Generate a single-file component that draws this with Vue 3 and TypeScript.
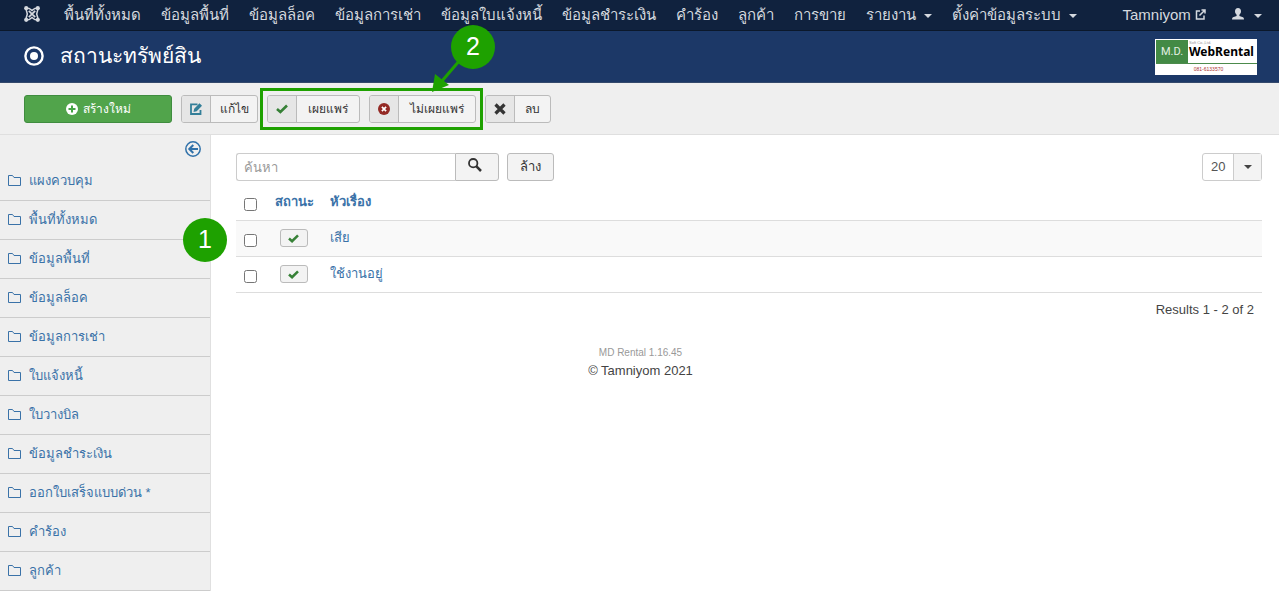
<script setup lang="ts">
import { ref } from 'vue'

interface MenuItem { label: string; dropdown?: boolean }
interface Row { id: number; title: string }

const menu: MenuItem[] = [
  { label: 'พื้นที่ทั้งหมด' },
  { label: 'ข้อมูลพื้นที่' },
  { label: 'ข้อมูลล็อค' },
  { label: 'ข้อมูลการเช่า' },
  { label: 'ข้อมูลใบแจ้งหนี้' },
  { label: 'ข้อมูลชำระเงิน' },
  { label: 'คำร้อง' },
  { label: 'ลูกค้า' },
  { label: 'การขาย' },
  { label: 'รายงาน', dropdown: true },
  { label: 'ตั้งค่าข้อมูลระบบ', dropdown: true },
]

const sidebar: string[] = [
  'แผงควบคุม',
  'พื้นที่ทั้งหมด',
  'ข้อมูลพื้นที่',
  'ข้อมูลล็อค',
  'ข้อมูลการเช่า',
  'ใบแจ้งหนี้',
  'ใบวางบิล',
  'ข้อมูลชำระเงิน',
  'ออกใบเสร็จแบบด่วน *',
  'คำร้อง',
  'ลูกค้า',
]

const rows: Row[] = [
  { id: 1, title: 'เสีย' },
  { id: 2, title: 'ใช้งานอยู่' },
]

const search = ref('')
const limit = ref('20')
const selected = ref<number[]>([])
</script>

<template>
  <div class="page">
    <nav class="navbar">
      <a class="brand" href="#" aria-label="Joomla">
        <svg width="16" height="16" viewBox="0 0 16 16" fill="none" stroke="currentColor">
          <path d="M4.800 4.800L11.200 11.200M11.200 4.800L4.800 11.200" stroke-width="1.700" />
          <path d="M2.500 2.500Q4.500 1.800 6 3L8 4.600L10 3Q11.500 1.800 13.500 2.500Q14.200 4.500 13.200 6Q12.200 8 13.200 10Q14.200 11.500 13.500 13.500Q11.500 14.200 10 13L8 11.400L6 13Q4.500 14.200 2.500 13.500Q1.800 11.500 2.800 10Q3.800 8 2.800 6Q1.800 4.500 2.500 2.500Z" stroke-width="1.600" />
          <g fill="currentColor" stroke="none">
            <circle cx="2.200" cy="2.200" r="2.100" /><circle cx="13.800" cy="2.200" r="2.100" />
            <circle cx="2.200" cy="13.800" r="2.100" /><circle cx="13.800" cy="13.800" r="2.100" />
          </g>
        </svg>
      </a>
      <ul class="menu">
        <li v-for="item in menu" :key="item.label">
          <a href="#">{{ item.label }}<i v-if="item.dropdown" class="caret"></i></a>
        </li>
      </ul>
      <a class="site" href="#">Tamniyom
        <svg width="11" height="11" viewBox="0 0 11 11" fill="none" stroke="currentColor" stroke-width="1.500">
          <path d="M5 2H1.500V10H9V6.500M4.500 6.500L9.500 1.500M6.500 1H10V4.500" />
        </svg>
      </a>
      <button class="user" type="button" aria-label="User menu">
        <svg width="12" height="12" viewBox="0 0 12 12" fill="currentColor">
          <path d="M6 0C8 0 9 1.500 9 3.300C9 5 8.200 6 7.400 6.800V8L11 9.200Q12 9.600 12 11.500H0Q0 9.600 1 9.200L4.600 8V6.800C3.800 6 3 5 3 3.300C3 1.500 4 0 6 0Z" />
        </svg>
        <i class="caret"></i>
      </button>
    </nav>

    <header class="header">
      <svg width="20" height="20" viewBox="0 0 20 20">
        <circle cx="10" cy="10" r="8.600" fill="none" stroke="currentColor" stroke-width="2.400" />
        <circle cx="10" cy="10" r="4" fill="currentColor" />
      </svg>
      <h1>สถานะทรัพย์สิน</h1>
      <div class="logo">
        <div class="logo-top">
          <span class="logo-md">M.D.</span>
          <span class="logo-name"><small>Soft Co.,Ltd.</small><b>WebRental</b></span>
        </div>
        <span class="logo-phone">081-6133570</span>
      </div>
    </header>

    <div class="toolbar">
      <button class="create" type="button">
        <svg width="12" height="12" viewBox="0 0 12 12"><circle cx="6" cy="6" r="6" fill="currentColor" /><path d="M6 2.500V9.500M2.500 6H9.500" stroke="#46a546" stroke-width="2" /></svg>
        สร้างใหม่
      </button>
      <button class="tool tool-edit" type="button">
        <span class="tool-icon edit">
          <svg width="12" height="12" viewBox="0 0 12 12" fill="none" stroke="currentColor">
            <path d="M7.500 1.300H1V11H10.500V7" stroke-width="1.800" /><path d="M3.500 9L4.200 5.800L9.500 .3L12 2.700L6.700 8.200Z" fill="currentColor" stroke="none" />
          </svg>
        </span>
        <span class="tool-label">แก้ไข</span>
      </button>
      <div class="publish-group">
        <button class="tool tool-publish" type="button">
          <span class="tool-icon ok">
            <svg width="12" height="10" viewBox="0 0 12 10"><path d="M1 5L4.400 8L11 1.500" fill="none" stroke="currentColor" stroke-width="2.600" /></svg>
          </span>
          <span class="tool-label">เผยแพร่</span>
        </button>
        <button class="tool tool-unpublish" type="button">
          <span class="tool-icon bad">
            <svg width="12" height="12" viewBox="0 0 12 12"><circle cx="6" cy="6" r="6" fill="currentColor" /><path d="M3.900 3.900L8.100 8.100M8.100 3.900L3.900 8.100" stroke="#fff" stroke-width="1.700" /></svg>
          </span>
          <span class="tool-label">ไม่เผยแพร่</span>
        </button>
        <span class="highlight"></span>
        <svg class="arrow" width="32" height="36" viewBox="0 0 32 36">
          <path d="M28 3L10 24" stroke="#1ea100" stroke-width="3" />
          <path d="M0 35L3 17L17 28Z" fill="#1ea100" />
        </svg>
        <span class="badge badge-two">2</span>
      </div>
      <button class="tool tool-delete" type="button">
        <span class="tool-icon">
          <svg width="12" height="12" viewBox="0 0 12 12"><path d="M1.500 1.500L10.500 10.500M10.500 1.500L1.500 10.500" stroke="currentColor" stroke-width="3.200" /></svg>
        </span>
        <span class="tool-label">ลบ</span>
      </button>
    </div>

    <div class="body">
      <aside class="sidebar">
        <button class="collapse" type="button" aria-label="Collapse sidebar">
          <svg width="16" height="16" viewBox="0 0 16 16" fill="none" stroke="currentColor">
            <circle cx="8" cy="8" r="7.200" stroke-width="1.500" />
            <path d="M13 8H5M8.300 4L4.300 8L8.300 12" stroke-width="2" />
          </svg>
        </button>
        <ul>
          <li v-for="item in sidebar" :key="item">
            <a href="#">
              <svg width="13" height="12" viewBox="0 0 13 12" fill="none" stroke="currentColor"><path d="M.5 10.500V.5H4.500L6 2.500H12.500V10.500Z" /></svg>
              {{ item }}
            </a>
          </li>
        </ul>
        <span class="badge badge-one">1</span>
      </aside>

      <main class="content">
        <form class="filters" @submit.prevent>
          <div class="search">
            <input v-model="search" type="text" placeholder="ค้นหา" aria-label="ค้นหา">
            <button type="submit" aria-label="Search">
              <svg width="14" height="14" viewBox="0 0 14 14" fill="none" stroke="currentColor"><circle cx="5.200" cy="5.200" r="4.200" stroke-width="1.800" /><path d="M8.200 8.200L13 13" stroke-width="2.500" /></svg>
            </button>
          </div>
          <button class="clear" type="button" @click="search = ''">ล้าง</button>
          <div class="limit">
            <select v-model="limit" aria-label="Rows per page">
              <option>20</option><option>50</option><option>100</option>
            </select>
            <span class="limit-arrow"><i class="caret"></i></span>
          </div>
        </form>

        <table>
          <thead>
            <tr>
              <th class="col-check"><input type="checkbox" aria-label="Select all"></th>
              <th class="col-status"><a href="#">สถานะ</a></th>
              <th><a href="#">หัวเรื่อง</a></th>
            </tr>
          </thead>
          <tbody>
            <tr v-for="row in rows" :key="row.id">
              <td class="col-check"><input v-model="selected" type="checkbox" :value="row.id" :aria-label="row.title"></td>
              <td class="col-status">
                <button class="state" type="button" aria-label="Published">
                  <svg width="11" height="9" viewBox="0 0 12 10"><path d="M1 5L4.400 8L11 1.500" fill="none" stroke="currentColor" stroke-width="2.800" /></svg>
                </button>
              </td>
              <td><a href="#">{{ row.title }}</a></td>
            </tr>
          </tbody>
        </table>
        <p class="results">Results 1 - 2 of 2</p>
        <footer>
          <small>MD Rental 1.16.45</small>
          <span>© Tamniyom 2021</span>
        </footer>
      </main>
    </div>
  </div>
</template>

<style>
body { margin: 0; background: #fff; }
</style>

<style scoped>
* { box-sizing: border-box; }
.page {
  min-height: 100vh;
  display: flex;
  flex-direction: column;
  overflow: hidden;
  font: 13px/18px "Liberation Sans", Arial, sans-serif;
  color: #444;
}
a { color: #3a72a8; text-decoration: none; }
button { font: inherit; cursor: pointer; }
ul { list-style: none; margin: 0; padding: 0; }
.caret {
  display: inline-block;
  border: 4px solid transparent;
  border-top-color: currentColor;
  border-bottom: 0;
  vertical-align: middle;
}
.navbar {
  display: flex;
  align-items: center;
  height: 31px;
  padding: 0 17px 1px 24px;
  background: #10223e;
  border-bottom: 1px solid #0b182b;
  color: #d5d9df;
  font-size: 15px;
  line-height: 20px;
  white-space: nowrap;
}
.navbar a { color: inherit; }
.navbar .brand { display: flex; margin: 0 24px 2px 0; }
.menu { display: flex; gap: 20px; flex: 1; }
.menu .caret { margin-left: 8px; }
.site { margin-right: 26px; }
.user {
  display: flex;
  align-items: center;
  gap: 10px;
  padding: 0;
  border: 0;
  background: none;
  color: inherit;
}
.user svg { margin-bottom: 2px; }
.user .caret { margin-top: 2px; }
.header {
  display: flex;
  align-items: center;
  gap: 16px;
  height: 52px;
  padding: 0 22px 2px 24px;
  background: #1c3867;
  border-bottom: 1px solid #34496c;
  color: #fff;
}
.header h1 { flex: 1; margin: 0; font-size: 21px; line-height: 30px; font-weight: 400; }
.logo { width: 102px; height: 36px; padding: 1px 0 0 1px; background: #fff; color: #000; margin-top: 2px; }
.logo-top { display: flex; height: 24px; border-bottom: 1px solid #4c8b4c; }
.logo-md {
  width: 32px;
  flex: none;
  background: #438a45;
  color: #e4f0e4;
  font: 11px/24px Roboto, sans-serif;
  text-align: center;
}
.logo-name { display: flex; flex-direction: column; padding-left: 1px; }
.logo-name small { color: #999; font-size: 4px; line-height: 5px; }
.logo-name b { font: 700 12px/14px "Noto Sans", sans-serif; }
.logo-phone { display: block; padding-left: 4px; color: #a33; font: 5px/10px "Liberation Sans", sans-serif; text-align: center; }
.toolbar {
  display: flex;
  align-items: center;
  gap: 9px;
  height: 52px;
  padding: 0 24px;
  background: #efefef;
  border-bottom: 1px solid #dfdfdf;
  white-space: nowrap;
}
.create {
  width: 148px;
  height: 28px;
  display: flex;
  align-items: center;
  justify-content: center;
  gap: 5px;
  border: 1px solid #3f8c3f;
  border-radius: 3px;
  background: #51a44b;
  color: #fff;
  font-size: 12px;
}
.tool {
  display: flex;
  height: 28px;
  padding: 0;
  overflow: hidden;
  border: 1px solid #bbb;
  border-radius: 3px;
  background: #f3f3f3;
  color: #333;
  font-size: 12px;
  line-height: 26px;
}
.tool-edit { width: 77px; }
.tool-publish { width: 93px; }
.tool-unpublish { width: 107px; }
.tool-delete { width: 66px; }
.tool-icon {
  width: 29px;
  flex: none;
  display: flex;
  align-items: center;
  justify-content: center;
  border-right: 1px solid #bbb;
  background: #e6e6e6;
}
.tool-label { flex: 1; text-align: center; }
.edit { color: #347f99; }
.ok { color: #378137; }
.bad { color: #942a25; }
.publish-group { position: relative; display: flex; gap: 9px; }
.highlight {
  position: absolute;
  inset: -7px;
  border: 3px solid #1ea100;
  pointer-events: none;
}
.arrow { position: absolute; right: 12px; top: -38px; z-index: 2; }
.badge {
  position: absolute;
  z-index: 3;
  width: 44px;
  height: 44px;
  border-radius: 50%;
  background: #1ea100;
  color: #fff;
  font-size: 25px;
  line-height: 42px;
  text-align: center;
}
.badge-two { right: -19px; top: -70px; }
.badge-one { right: -17px; top: 83px; }
.body { display: flex; flex: 1; }
.sidebar {
  position: relative;
  width: 211px;
  flex: none;
  background: #efefef;
  border-right: 1px solid #e0e0e0;
}
.collapse {
  display: flex;
  margin: 0 9px 5px auto;
  padding: 6px 0 0;
  border: 0;
  background: none;
  color: #3071a9;
}
.sidebar li { height: 39px; border-bottom: 1px solid #ccc; }
.sidebar a { display: flex; align-items: center; gap: 8px; height: 38px; padding-left: 8px; }
.content { flex: 1; min-width: 0; padding: 18px 17px 0 25px; }
.filters { display: flex; gap: 8px; }
.search { display: flex; }
.search input {
  width: 219px;
  height: 28px;
  padding: 4px 7px;
  border: 1px solid #ccc;
  border-right: 0;
  border-radius: 3px 0 0 3px;
  font: inherit;
  outline: 0;
}
.search input::placeholder { color: #999; opacity: 1; }
.search button, .clear {
  height: 28px;
  border: 1px solid #bbb;
  border-radius: 3px;
  background: #f3f3f3;
  color: #333;
}
.search button { width: 44px; padding: 0 4px 0 0; border-radius: 0 3px 3px 0; }
.clear { padding: 0 12px; }
.limit { position: relative; margin-left: auto; width: 60px; }
.limit select {
  appearance: none;
  width: 100%;
  height: 28px;
  padding: 0 8px;
  border: 1px solid #ccc;
  border-radius: 3px;
  background: #fff;
  color: #555;
  font: inherit;
}
.limit-arrow {
  position: absolute;
  inset: 1px 1px 1px auto;
  width: 28px;
  display: flex;
  align-items: center;
  justify-content: center;
  border-left: 1px solid #ccc;
  background: #f3f3f3;
  pointer-events: none;
}
table { width: 100%; border-collapse: collapse; text-align: left; }
tr { border-bottom: 1px solid #ddd; }
th { height: 39px; padding: 4px 8px 0; }
td { height: 36px; padding: 0 8px; }
tbody tr:nth-child(odd) { background: #f9f9f9; }
.col-check { width: 30px; }
.col-check input { display: block; width: 13px; height: 13px; margin: 4px 0 0; }
.col-status { width: 56px; text-align: center; }
.state {
  display: inline-flex;
  align-items: center;
  justify-content: center;
  width: 28px;
  height: 18px;
  padding: 0 2px 0 0;
  border: 1px solid #bbb;
  border-radius: 3px;
  background: #f3f3f3;
  color: #378137;
  vertical-align: middle;
}
.results { margin: 8px 8px 0; text-align: right; }
footer { display: flex; flex-direction: column; align-items: center; margin: 25px 217px 0 0; }
footer small { color: #999; font-size: 10px; }
</style>
